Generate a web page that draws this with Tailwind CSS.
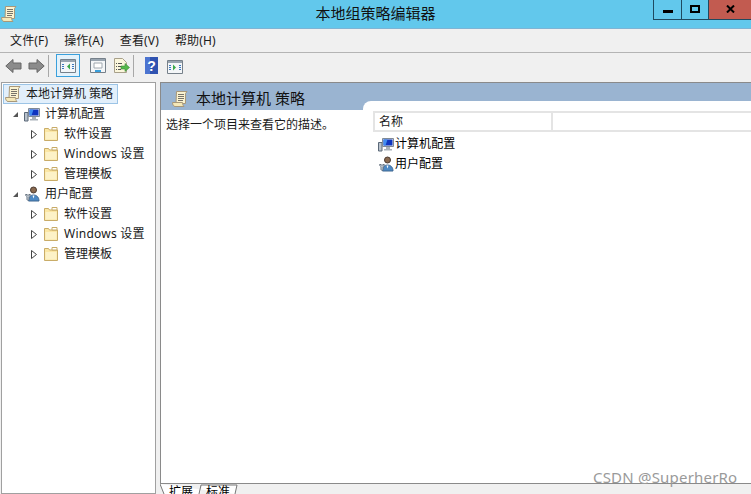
<!DOCTYPE html>
<html lang="zh-CN">
<head>
    <meta charset="utf-8">
    <title>本地组策略编辑器</title>
    <script src="https://cdn.jsdelivr.net/npm/@tailwindcss/browser@4"></script>
</head>
<body class="w-[751px] h-[494px] overflow-hidden relative bg-[#f0f0f0] text-[12px] text-black font-['Noto_Sans','Noto_Sans_CJK_SC',sans-serif]">

<svg class="hidden">
    <symbol id="scroll" viewBox="0 0 16 16">
        <path d="M4.500 .5H15l-1.500 2V12.500H4z" fill="#fbf3d0" stroke="#a8987a" stroke-width="1"/>
        <path d="M.5 11.500h10c0 1.500.5 3 1.500 4H3c-1.500 0-2.500-2-2.500-4z" fill="#f5e8b8" stroke="#a8987a" stroke-width="1"/>
        <path d="M6 3.500h6M6 5.500h6M6 7.500h6M6 9.500h5" stroke="#77736a" stroke-width="1"/>
    </symbol>
    <symbol id="folder" viewBox="0 0 16 16">
        <path d="M1.500 2.500h4l1 1.500h8v10.500h-13z" fill="#fbe7a5" stroke="#c9ac68" stroke-width="1"/>
        <path d="M2.500 6h11v7.500h-11z" fill="#fdf2c8"/>
        <path d="M9 1.500h5V4H9z" fill="#fff" stroke="#c9ac68" stroke-width="1"/>
    </symbol>
    <symbol id="computer" viewBox="0 0 16 16">
        <path d="M.5 6.500h3.500v8.500H.5z" fill="#b9c2cc" stroke="#5a6878" stroke-width="1"/>
        <path d="M4.500 2.500h11v8h-11z" fill="#e3e7ec" stroke="#7f8a96" stroke-width="1"/>
        <path d="M5.500 3.500h9v6h-9z" fill="#0f35c0"/>
        <path d="M5.500 3.500h4l-2 6h-2z" fill="#3f8cf0"/>
        <path d="M8 11h4v2h2v1.500H6V13h2z" fill="#a9b1ba"/>
    </symbol>
    <symbol id="user" viewBox="0 0 16 16">
        <circle cx="9.500" cy="4" r="3" fill="#8a6a50" stroke="#4b3a30" stroke-width="1"/>
        <path d="M4.500 15c0-4 2-6 5-6s5.500 2 5.500 6z" fill="#4d89c4" stroke="#3f6690" stroke-width="1"/>
        <path d="M2 8c-1 1 0 2 1 2.500v3c0 1 2 1 2 0v-3c1-.5 1.500-1.500 1-2.500l-1 1H3z" fill="#d5dde6" stroke="#66727f" stroke-width="1"/>
        <path d="M8.500 9.500l1 3 1-3z" fill="#fff"/>
    </symbol>
    <symbol id="pane" viewBox="0 0 16 16">
        <path d="M.5 1.500h15v13H.5z" fill="#f4f6f8" stroke="#76808a" stroke-width="1"/>
        <path d="M1 2h14v2H1z" fill="#98a4b0"/>
        <path d="M2 6h2v1H2zM2 8h2v1H2zM2 10h2v1H2zM12 6h2v1h-2zM12 8h2v1h-2zM12 10h2v1h-2z" fill="#3a78c0"/>
    </symbol>
</svg>

<!-- Title bar -->
<div class="h-[29px] bg-[#62c8ec] border-b border-[#7fb4d4] flex relative">
    <svg class="w-[16px] h-[16px] mt-[6px] ml-[1px]"><use href="#scroll"/></svg>
    <div class="absolute inset-x-0 top-[2px] text-center text-[15px] leading-[22px] text-[#111]">本地组策略编辑器</div>
    <div class="ml-auto flex h-[20px] border-b border-l border-[#1f4a60]">
        <div class="w-[28px] border-r border-[#1f4a60] flex justify-center"><div class="w-[10px] h-[3px] bg-black mt-[10px]"></div></div>
        <div class="w-[26px] flex justify-center"><div class="w-[10px] h-[8px] border-2 border-black mt-[5px]"></div></div>
        <div class="w-[43px] bg-[#c25b50] border-l border-[#1f4a60] flex justify-center">
            <svg class="w-[9px] h-[8px] mt-[5px]" viewBox="0 0 9 8"><path d="M1 .5l7 7M8 .5l-7 7" stroke="#000" stroke-width="2"/></svg>
        </div>
    </div>
</div>

<!-- Menu bar -->
<div class="h-[24px] border-b border-[#b4b4b4] flex items-center pt-[1px] pl-[10px] gap-[16px] text-[#1a1a1a] tracking-[0.15px]">
    <span>文件(F)</span>
    <span>操作(A)</span>
    <span>查看(V)</span>
    <span>帮助(H)</span>
</div>

<!-- Toolbar -->
<div class="h-[29px] pl-[5px] pt-px">
    <div class="h-[23px] flex items-center">
        <svg class="w-[17px] h-[16px] mr-[6px]" viewBox="0 0 17 16"><path d="M.8 8L8 1.500v3.500h8v6H8v3.500z" fill="#8b8b8b" stroke="#666" stroke-width="1"/></svg>
        <svg class="w-[17px] h-[16px]" viewBox="0 0 17 16"><path d="M16.200 8L9 1.500v3.500H1v6h8v3.500z" fill="#8b8b8b" stroke="#666" stroke-width="1"/></svg>
        <div class="w-px h-[22px] bg-[#a8a8a8] ml-[3px] mr-[7px]"></div>
        <div class="w-[24px] h-[23px] border border-[#3aa0dc] bg-[#e4f2fb] flex items-center justify-center">
            <svg class="w-[16px] h-[16px]" viewBox="0 0 16 16"><use href="#pane"/><path d="M10 5.500v6l-3-3z" fill="#3aa84a"/></svg>
        </div>
        <svg class="w-[16px] h-[17px] ml-[10px]" viewBox="0 0 16 17"><path d="M.5 1.500h15v14H.5z" fill="#f4f6f8" stroke="#76808a" stroke-width="1"/><path d="M1 2h14v2H1z" fill="#98a4b0"/><path d="M4 6h8v5H4z" fill="#fff" stroke="#a0a8b0" stroke-width="1"/><path d="M5 13h6v2H5z" fill="#3aa0dc"/></svg>
        <svg class="w-[17px] h-[17px] ml-[7px]" viewBox="0 0 17 17"><path d="M1.500 1.500h8l4 4v10h-12z" fill="#fbf6dc" stroke="#a8a08a" stroke-width="1"/><path d="M3 6h1v1H3zM3 9h1v1H3zM3 12h1v1H3zM5 6h4v1H5zM5 9h3v1H5zM5 12h3v1H5z" fill="#555"/><path d="M8 9h4V6.500l4.500 4-4.500 4V12H8z" fill="#55b84a" stroke="#3d8a35" stroke-width=".6"/></svg>
        <div class="w-px h-[22px] bg-[#a8a8a8] ml-[3px] mr-[11px]"></div>
        <svg class="w-[13px] h-[17px] mr-[9px]" viewBox="0 0 13 17"><path d="M0 0h13v17H0z" fill="#2f52b0"/><path d="M0 0h5v17H0z" fill="#4c74d0"/><text x="6.500" y="13.500" font-size="14" font-weight="700" text-anchor="middle" fill="#fff" font-family="Liberation Sans, sans-serif">?</text></svg>
        <svg class="w-[16px] h-[16px] mt-[3px]" viewBox="0 0 16 16"><use href="#pane"/><path d="M6 5.500v6l3-3z" fill="#3aa84a"/></svg>
    </div>
</div>

<!-- Main panes -->
<div class="flex h-[412px]">

    <!-- Tree -->
    <div class="w-[155px] ml-px bg-white border border-[#a0a0a0] shrink-0 text-[#1a1a1a]">
        <div class="h-[20px] ml-px mt-px w-[115px] flex items-center bg-[#e2effb] border border-[#9cc4e6]">
            <svg class="w-[16px] h-[16px] ml-px mr-[5px]"><use href="#scroll"/></svg>
            <span class="whitespace-pre">本地计算机 策略</span>
        </div>
        <div class="h-[20px] flex items-center pl-[10px]">
            <svg class="w-[7px] h-[7px]" viewBox="0 0 7 7"><path d="M6 1v5H1z" fill="#555"/></svg>
            <svg class="w-[16px] h-[16px] ml-[5px] mr-[5px]"><use href="#computer"/></svg>
            <span>计算机配置</span>
        </div>
        <div class="h-[20px] flex items-center pl-[29px]">
            <svg class="w-[6px] h-[9px]" viewBox="0 0 6 9"><path d="M.5.5l5 4-5 4z" fill="#fff" stroke="#444"/></svg>
            <svg class="w-[16px] h-[16px] ml-[6px] mr-[5px]"><use href="#folder"/></svg>
            <span>软件设置</span>
        </div>
        <div class="h-[20px] flex items-center pl-[29px]">
            <svg class="w-[6px] h-[9px]" viewBox="0 0 6 9"><path d="M.5.5l5 4-5 4z" fill="#fff" stroke="#444"/></svg>
            <svg class="w-[16px] h-[16px] ml-[6px] mr-[5px]"><use href="#folder"/></svg>
            <span class="tracking-[0.25px]">Windows 设置</span>
        </div>
        <div class="h-[20px] flex items-center pl-[29px]">
            <svg class="w-[6px] h-[9px]" viewBox="0 0 6 9"><path d="M.5.5l5 4-5 4z" fill="#fff" stroke="#444"/></svg>
            <svg class="w-[16px] h-[16px] ml-[6px] mr-[5px]"><use href="#folder"/></svg>
            <span>管理模板</span>
        </div>
        <div class="h-[20px] flex items-center pl-[10px]">
            <svg class="w-[7px] h-[7px]" viewBox="0 0 7 7"><path d="M6 1v5H1z" fill="#555"/></svg>
            <svg class="w-[16px] h-[16px] ml-[5px] mr-[5px]"><use href="#user"/></svg>
            <span>用户配置</span>
        </div>
        <div class="h-[20px] flex items-center pl-[29px]">
            <svg class="w-[6px] h-[9px]" viewBox="0 0 6 9"><path d="M.5.5l5 4-5 4z" fill="#fff" stroke="#444"/></svg>
            <svg class="w-[16px] h-[16px] ml-[6px] mr-[5px]"><use href="#folder"/></svg>
            <span>软件设置</span>
        </div>
        <div class="h-[20px] flex items-center pl-[29px]">
            <svg class="w-[6px] h-[9px]" viewBox="0 0 6 9"><path d="M.5.5l5 4-5 4z" fill="#fff" stroke="#444"/></svg>
            <svg class="w-[16px] h-[16px] ml-[6px] mr-[5px]"><use href="#folder"/></svg>
            <span class="tracking-[0.25px]">Windows 设置</span>
        </div>
        <div class="h-[20px] flex items-center pl-[29px]">
            <svg class="w-[6px] h-[9px]" viewBox="0 0 6 9"><path d="M.5.5l5 4-5 4z" fill="#fff" stroke="#444"/></svg>
            <svg class="w-[16px] h-[16px] ml-[6px] mr-[5px]"><use href="#folder"/></svg>
            <span>管理模板</span>
        </div>
    </div>

    <!-- Right pane -->
    <div class="ml-[4px] flex-1 flex flex-col min-w-0">
        <div class="h-[402px] border-l border-t border-b border-[#8a8a8a] flex bg-white overflow-hidden">
            <div class="w-[202px] shrink-0">
                <div class="h-[27px] bg-[#9ab4d1] flex items-center pl-[11px] pt-[4px]">
                    <svg class="w-[16px] h-[16px] mr-[8px]"><use href="#scroll"/></svg>
                    <span class="text-[15px] whitespace-pre text-[#111]">本地计算机 策略</span>
                </div>
                <div class="pl-[5px] pt-[6px] leading-[18px] text-[#1a1a1a]">选择一个项目来查看它的描述。</div>
            </div>
            <div class="flex-1 bg-[#9ab4d1]">
                <div class="h-full mt-[18px] bg-white rounded-tl-[8px] pt-[10px] pl-[10px]">
                    <div class="h-[21px] border-y-2 border-[#e4e4e4] flex text-[#1a1a1a]">
                        <div class="w-[180px] border-x-2 border-[#e4e4e4] pl-[4px] leading-[17px]">名称</div>
                    </div>
                    <div class="h-[20px] mt-[2px] flex items-center pl-[5px] tracking-[0.05px]">
                        <svg class="w-[16px] h-[16px] mr-[1px]"><use href="#computer"/></svg>
                        <span>计算机配置</span>
                    </div>
                    <div class="h-[20px] flex items-center pl-[5px]">
                        <svg class="w-[16px] h-[16px] mr-[1px]"><use href="#user"/></svg>
                        <span>用户配置</span>
                    </div>
                </div>
            </div>
        </div>
        <!-- Tabs, cut off by the window edge -->
        <div class="h-[10px] overflow-hidden relative">
            <svg class="absolute left-0 top-0 w-[90px] h-[10px]" viewBox="0 0 90 10">
                <path d="M0 0l4 10h36l2-9h35l-2 9z" fill="#fff"/>
                <path d="M0 0l4 10M39 10l2-9h36l-2 9" fill="none" stroke="#777" stroke-width="1"/>
            </svg>
            <span class="absolute left-[9px] top-[1px] leading-[14px]">扩展</span>
            <span class="absolute left-[46px] top-[1px] leading-[14px]">标准</span>
        </div>
    </div>
</div>

<!-- Watermark -->
<div class="absolute left-[593px] top-[468px] text-[15px] tracking-[0.2px] leading-[18px] text-[#9a9a9a] whitespace-nowrap">CSDN @SuperherRo</div>

</body>
</html>
